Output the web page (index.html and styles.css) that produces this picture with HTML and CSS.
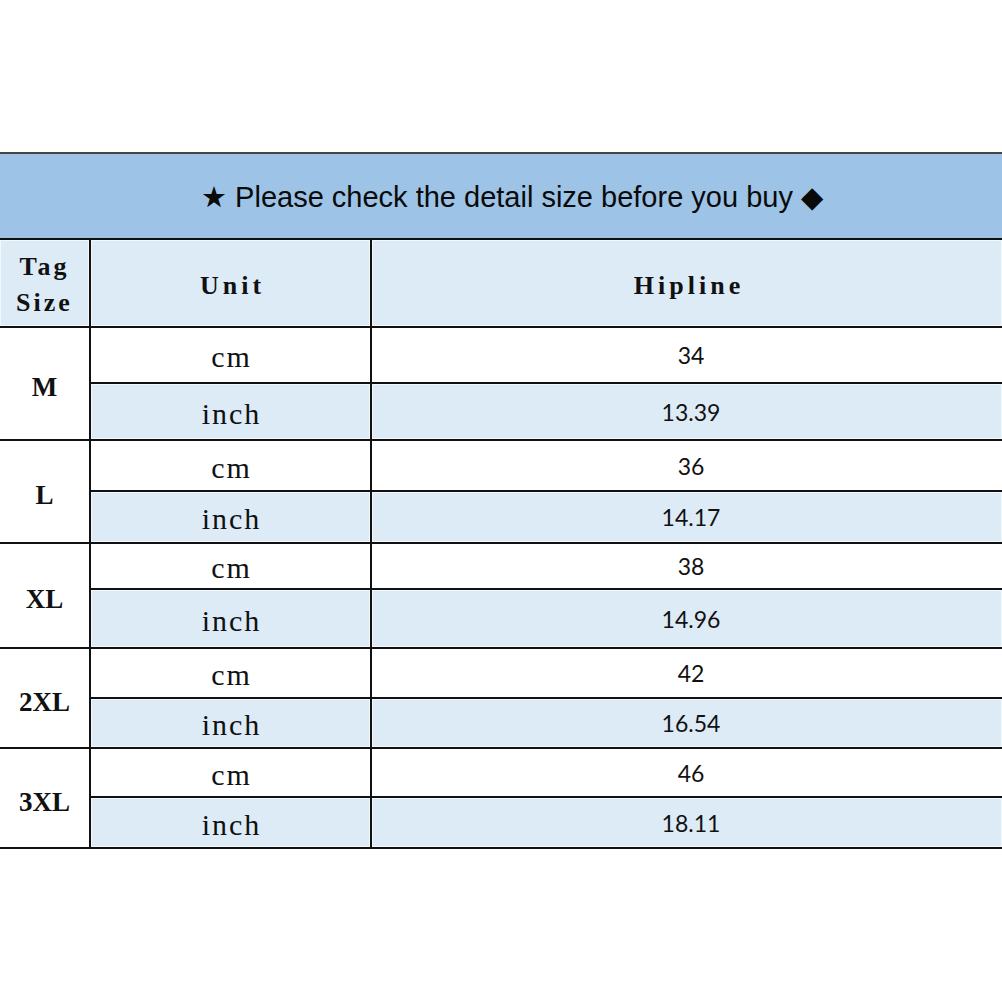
FILE: index.html
```html
<!DOCTYPE html>
<html>
<head>
<meta charset="utf-8">
<link rel="stylesheet" href="styles.css">
</head>
<body>
<main class="sheet">
  <table class="size-table">
    <colgroup>
      <col class="c-tag">
      <col class="c-unit">
      <col class="c-val">
    </colgroup>
    <tr class="r-title">
      <td colspan="3" class="title"><span class="title-text">★ Please check the detail size before you buy ◆</span></td>
    </tr>
    <tr class="r-head">
      <td class="head tag-head">Tag<br>Size</td>
      <td class="head">Unit</td>
      <td class="head">Hipline</td>
    </tr>
    <tr class="r-m1">
      <td rowspan="2" class="size">M</td>
      <td class="unit">cm</td>
      <td class="num">34</td>
    </tr>
    <tr class="r-m2 alt">
      <td class="unit">inch</td>
      <td class="num">13.39</td>
    </tr>
    <tr class="r-l1">
      <td rowspan="2" class="size">L</td>
      <td class="unit">cm</td>
      <td class="num">36</td>
    </tr>
    <tr class="r-l2 alt">
      <td class="unit">inch</td>
      <td class="num">14.17</td>
    </tr>
    <tr class="r-xl1">
      <td rowspan="2" class="size">XL</td>
      <td class="unit">cm</td>
      <td class="num">38</td>
    </tr>
    <tr class="r-xl2 alt">
      <td class="unit">inch</td>
      <td class="num">14.96</td>
    </tr>
    <tr class="r-2xl1">
      <td rowspan="2" class="size">2XL</td>
      <td class="unit">cm</td>
      <td class="num">42</td>
    </tr>
    <tr class="r-2xl2 alt">
      <td class="unit">inch</td>
      <td class="num">16.54</td>
    </tr>
    <tr class="r-3xl1">
      <td rowspan="2" class="size">3XL</td>
      <td class="unit">cm</td>
      <td class="num">46</td>
    </tr>
    <tr class="r-3xl2 alt">
      <td class="unit">inch</td>
      <td class="num">18.11</td>
    </tr>
  </table>
</main>
</body>
</html>
```

FILE: styles.css
```css
html, body {
  margin: 0;
  padding: 0;
  background: #ffffff;
}

.sheet {
  padding-top: 152px;
  width: 1002px;
}

.size-table {
  width: 1002px;
  border-collapse: collapse;
  table-layout: fixed;
  border: none;
}

.c-tag { width: 90px; }
.c-unit { width: 281px; }
.c-val { width: 631px; }

.size-table td {
  border: 2px solid #111111;
  padding: 0;
  text-align: center;
  vertical-align: middle;
  color: #111111;
}

.size-table td:first-child { border-left: none; }
.size-table td:last-child { border-right: none; }

.r-title { height: 86px; }
.r-head { height: 88px; }
.r-m1 { height: 56px; }
.r-m2 { height: 57px; }
.r-l1 { height: 51px; }
.r-l2 { height: 52px; }
.r-xl1 { height: 46px; }
.r-xl2 { height: 59px; }
.r-2xl1 { height: 50px; }
.r-2xl2 { height: 50px; }
.r-3xl1 { height: 49px; }
.r-3xl2 { height: 51px; }

.title {
  background: #9dc3e6;
  border-top: 2px solid #454545 !important;
  border-left: none;
  border-right: none;
  font-family: "Liberation Sans", Arial, sans-serif;
  font-size: 29px;
  padding-left: 22px !important;
  padding-top: 2px !important;
}

.title-text {
  color: #0a0a0a;
}

.head {
  background: #ddebf7;
  font-family: "Liberation Serif", "Times New Roman", serif;
  font-weight: bold;
  font-size: 26px;
  letter-spacing: 4px;
  padding-top: 6px !important;
  padding-left: 4px !important;
  box-shadow: inset 1px 1px 0 #f3f8fc, inset -1px -1px 0 #f3f8fc;
}

.tag-head {
  line-height: 36px;
  letter-spacing: 3px;
  padding-top: 4px !important;
  padding-left: 0 !important;
}

.size {
  background: #ffffff;
  font-family: "Liberation Serif", "Times New Roman", serif;
  font-weight: bold;
  font-size: 27px;
  padding-top: 8px !important;
}

.unit {
  font-family: "Liberation Serif", "Times New Roman", serif;
  font-size: 30px;
  letter-spacing: 2px;
  padding-left: 2px !important;
  padding-top: 4px !important;
}

.num {
  font-family: Lato, "Open Sans", sans-serif;
  font-size: 23px;
  padding-left: 8px !important;
}

.alt .unit,
.alt .num {
  background: #ddebf7;
  box-shadow: inset 1px 1px 0 #f3f8fc, inset -1px -1px 0 #f3f8fc;
}
```
